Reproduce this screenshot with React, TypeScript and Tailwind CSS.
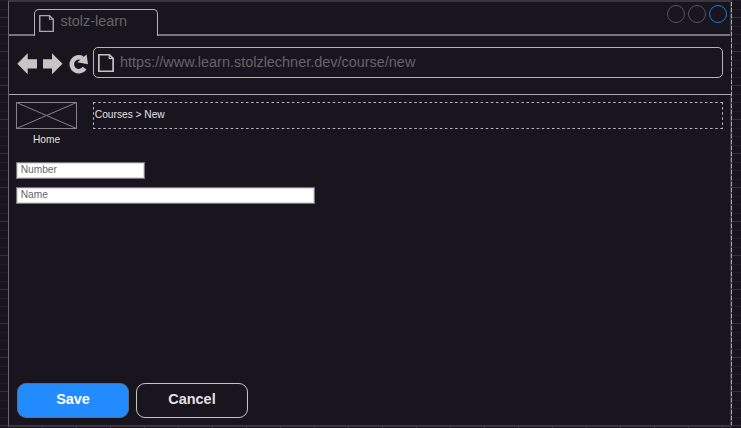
import React from "react";

function PageIcon({ className }: { className: string }) {
  return (
    <svg className={className} viewBox="0 0 14 17" fill="none" preserveAspectRatio="none">
      <path d="M.7 .7H9.8L13.3 4.2V16.3H.7Z" />
      <path d="M9.8 .7V4.2H13.3" strokeWidth="1" />
    </svg>
  );
}

function NavIcons() {
  return (
    <svg className="ml-[8px] mt-[16px] h-[24px] w-[73px] shrink-0" viewBox="17 52 73 24" fill="#c6c6c6">
      <path d="M17.3 63.8 27.7 53.2V59.2H37V68.5H27.7V74.3Z" />
      <path d="M62.5 63.8 52 53.2V59.2H43V68.5H52V74.3Z" />
      <path d="M84.6 68.1A7 7 0 1 1 82.4 58.2" fill="none" stroke="#c6c6c6" strokeWidth="4.6" />
      <path d="M86.6 54.6 88 64.2 77.3 62.3Z" />
    </svg>
  );
}

function Tab() {
  return (
    <div className="mt-[7px] flex h-[27px] w-[124px] shrink-0 rounded-t-[5px] border border-b-0 border-[#b4b3b6]">
      <PageIcon className="ml-[4px] mt-[5px] h-[17px] w-[15px] stroke-[#aaa9ac] stroke-[1.3]" />
      <span className="ml-[6.5px] mt-[3px] text-[14.45px] leading-[17px] text-[#666468]">stolz-learn</span>
    </div>
  );
}

function Field({ label, className }: { label: string; className: string }) {
  return (
    <div className={`h-[17px] border border-[#777] bg-white pl-[3.7px] text-[10.2px] leading-[14px] text-[#666] shadow-[inset_0_0_0_1px_#ddd] ${className}`}>
      {label}
    </div>
  );
}

export default function App() {
  return (
    <div className="flex h-[428px] w-[741px] overflow-hidden bg-[#18151e] font-['Liberation_Sans',Arial,sans-serif]">
      <Ruler className="w-[8px]" />
      <div className="flex w-[724px] shrink-0 flex-col">
        <div className="flex h-[427px] flex-col border-y-2 border-l border-b-[#39373d] border-l-[#6a686c] border-t-[#39373d] bg-[repeating-linear-gradient(to_bottom,#aaa_0_4px,#555_4px_6px)] bg-[length:1px_100%] bg-right bg-no-repeat pr-px">
          <div className="flex h-[34px] shrink-0 border-r border-[#39373d]">
            <div className="w-[25px] border-b-2 border-[#77757a]" />
            <Tab />
            <div className="flex flex-1 justify-end gap-[3px] border-b-2 border-[#77757a] pr-[3px] pt-[3px]">
              <span className="size-[18px] rounded-full border border-[#565459]" />
              <span className="size-[18px] rounded-full border border-[#565459]" />
              <span className="size-[18px] rounded-full border border-[#1d78d2]" />
            </div>
          </div>
          <div className="flex h-[59px] shrink-0 border-b border-[#a9a8ab]">
            <NavIcons />
            <div className="ml-[3px] mt-[11px] flex h-[31px] w-[630px] rounded-[5px] border border-[#b4b3b6]">
              <PageIcon className="ml-[4px] mt-[6px] h-[18px] w-[16px] stroke-[#c2c2c2] stroke-[1.6]" />
              <span className="ml-[6px] mt-[6px] text-[14.45px] leading-[17px] text-[#666468]">
                https://www.learn.stolzlechner.dev/course/new
              </span>
            </div>
          </div>
          <main className="flex flex-1 flex-col border-r border-[#39373d] pl-[7px] pt-[7px] text-[10.2px] text-[#e2e2e2]">
            <div className="flex items-start">
              <div className="flex w-[61px] flex-col items-center">
                <svg className="h-[27px] w-[61px]" viewBox="0 0 61 27" fill="none" stroke="#858387">
                  <rect x=".5" y=".5" width="60" height="26" />
                  <path d="M.5 .5 60.5 26.5M60.5 .5 .5 26.5" />
                </svg>
                <span className="mt-[5px] leading-[12px]">Home</span>
              </div>
              <svg className="ml-[16px] h-[27px] w-[630px] shrink-0" fill="none" stroke="#b7b6b9" strokeDasharray="2.55 2.55">
                <path d="M0 .5H630M0 26.5H630M.5 0V27M629.5 0V27" />
                <text x="1.8" y="15.8" fill="#e2e2e2" stroke="none">Courses &gt; New</text>
              </svg>
            </div>
            <Field label="Number" className="mt-[16px] w-[129px]" />
            <Field label="Name" className="mt-[8px] w-[299px]" />
            <div className="mb-[7px] mt-auto flex gap-[7px] pl-px text-[14.45px] font-bold">
              <button className="h-[35px] w-[112px] rounded-[9px] border border-[#5b6f8d] bg-[#228bff] pb-px text-white">Save</button>
              <button className="h-[35px] w-[112px] rounded-[9px] border border-[#c4c3c6] pb-px">Cancel</button>
            </div>
          </main>
        </div>
        <div className="h-px bg-[repeating-linear-gradient(to_right,#343137_0_1px,#18131a_1px_34px)]" />
      </div>
      <Ruler className="w-[9px]" />
    </div>
  );
}

function Ruler({ className }: { className: string }) {
  return (
    <svg className={`h-[428px] shrink-0 ${className}`}>
      {Array.from({ length: 51 }, (_, i) => (
        <path
          key={i}
          d={`M0 ${Math.round(i * 8.5) + 0.5}H9`}
          className={i % 4 === 2 ? "stroke-[#343137]" : "stroke-[#211e25]"}
        />
      ))}
    </svg>
  );
}
